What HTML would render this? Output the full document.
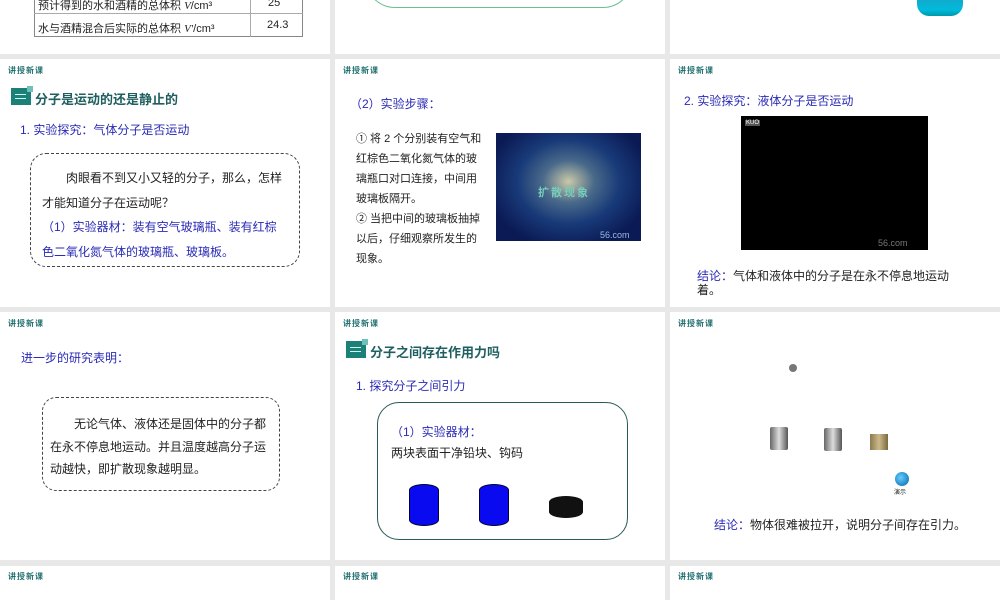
<!DOCTYPE html>
<html><head><meta charset="utf-8"><style>
*{margin:0;padding:0;box-sizing:border-box}
html,body{width:1000px;height:600px;overflow:hidden}
body{background:#e8e8e8;position:relative;font-family:"Liberation Sans","Noto Sans CJK SC",sans-serif;color:#222}
.s{position:absolute;background:#fff;width:330px;height:248px}
.a{position:absolute;white-space:nowrap}
.lbl{font-size:8px;font-weight:bold;color:#1e6e6e;letter-spacing:1px}
.blue{color:#2a2ab5}
.h{font-size:13px;font-weight:bold;color:#1f5f5f}
.ic{position:absolute;width:20px;height:17px;background:#1a8078}
.ic:before{content:"";position:absolute;right:-2px;top:-2px;width:6px;height:6px;background:#6fc0b8}
.ic:after{content:"";position:absolute;left:4px;top:10px;width:11px;height:1px;background:#cfe;box-shadow:0 -4px 0 #cfe}
.t{font-size:12px}
</style></head><body>
<!-- row1 -->
<div class="s" style="left:0;top:-194px"></div>
<div class="s" style="left:335px;top:-194px"></div>
<div class="s" style="left:670px;top:-194px"></div>
<div class="a" style="left:34px;top:-12px;width:269px;height:49px;border:1px solid #888;border-top:none"></div>
<div class="a" style="left:34px;top:13px;width:269px;border-top:1px solid #aaa"></div>
<div class="a" style="left:250px;top:-12px;height:49px;border-left:1px solid #aaa"></div>
<div class="a" style="left:38px;top:-3px;font-size:11px">预计得到的水和酒精的总体积 <i style="font-family:'Liberation Serif'">V</i>/cm³</div>
<div class="a" style="left:268px;top:-3px;font-size:11px">25</div>
<div class="a" style="left:38px;top:20px;font-size:11px">水与酒精混合后实际的总体积 <i style="font-family:'Liberation Serif'">V'</i>/cm³</div>
<div class="a" style="left:267px;top:19px;font-size:11px">24.3</div>
<div class="a" style="left:365px;top:-40px;width:268px;height:48px;border:1px solid #6cbf94;border-radius:0 0 30px 30px;border-top:none"></div>
<div class="a" style="left:917px;top:0;width:46px;height:16px;background:linear-gradient(#1ac,#0bd 60%,#09a);border-radius:0 0 12px 12px"></div>
<!-- row2 -->
<div class="s" style="left:0;top:59px"></div>
<div class="s" style="left:335px;top:59px"></div>
<div class="s" style="left:670px;top:59px"></div>
<div class="a lbl" style="left:8px;top:65px">讲授新课</div>
<div class="a lbl" style="left:343px;top:65px">讲授新课</div>
<div class="a lbl" style="left:678px;top:65px">讲授新课</div>
<div class="ic" style="left:11px;top:88px"></div>
<div class="a h" style="left:35px;top:89px">分子是运动的还是静止的</div>
<div class="a t blue" style="left:20px;top:121px">1. 实验探究：气体分子是否运动</div>
<div class="a" style="left:30px;top:153px;width:270px;height:114px;border:1px dashed #444;border-radius:16px"></div>
<div class="a t" style="left:42px;top:166px;line-height:24.5px;white-space:normal;width:246px">&emsp;&emsp;肉眼看不到又小又轻的分子，那么，怎样才能知道分子在运动呢？<br><span class="blue">（1）实验器材：装有空气玻璃瓶、装有红棕色二氧化氮气体的玻璃瓶、玻璃板。</span></div>
<div class="a t blue" style="left:350px;top:95px">（2）实验步骤：</div>
<div class="a" style="left:356px;top:129px;line-height:20px;white-space:normal;width:128px;font-size:11px">① 将 2 个分别装有空气和红棕色二氧化氮气体的玻璃瓶口对口连接，中间用玻璃板隔开。<br>② 当把中间的玻璃板抽掉以后，仔细观察所发生的现象。</div>
<div class="a" style="left:496px;top:133px;width:145px;height:108px;background:radial-gradient(ellipse at 50% 45%,#c9c9a8 0%,#4a6a8a 25%,#183a78 50%,#0b1a55 80%)"></div>
<div class="a" style="left:538px;top:184px;font-size:11px;font-weight:bold;color:#7cb;letter-spacing:2px">扩散现象</div>
<div class="a" style="left:600px;top:230px;font-size:9px;color:#9bd">56.com</div>
<div class="a t blue" style="left:684px;top:92px">2. 实验探究：液体分子是否运动</div>
<div class="a" style="left:741px;top:116px;width:187px;height:134px;background:#000"></div>
<div class="a" style="left:745px;top:120px;font-size:6px;color:#fff;background:#555;padding:0 1px">KUO</div>
<div class="a" style="left:878px;top:238px;font-size:9px;color:#777">56.com</div>
<div class="a t" style="left:697px;top:269px;white-space:normal;width:256px;line-height:14px"><span class="blue">结论：</span>气体和液体中的分子是在永不停息地运动着。</div>
<!-- row3 -->
<div class="s" style="left:0;top:312px"></div>
<div class="s" style="left:335px;top:312px"></div>
<div class="s" style="left:670px;top:312px"></div>
<div class="a lbl" style="left:8px;top:318px">讲授新课</div>
<div class="a lbl" style="left:343px;top:318px">讲授新课</div>
<div class="a lbl" style="left:678px;top:318px">讲授新课</div>
<div class="a t blue" style="left:21px;top:349px">进一步的研究表明：</div>
<div class="a" style="left:42px;top:397px;width:238px;height:94px;border:1px dashed #444;border-radius:14px"></div>
<div class="a t" style="left:50px;top:413px;line-height:22.5px;white-space:normal;width:222px">&emsp;&emsp;无论气体、液体还是固体中的分子都在永不停息地运动。并且温度越高分子运动越快，即扩散现象越明显。</div>
<div class="ic" style="left:346px;top:341px"></div>
<div class="a h" style="left:370px;top:342px">分子之间存在作用力吗</div>
<div class="a t blue" style="left:356px;top:377px">1. 探究分子之间引力</div>
<div class="a" style="left:377px;top:402px;width:251px;height:138px;border:1px solid #2a5a5a;border-radius:22px"></div>
<div class="a t blue" style="left:391px;top:423px">（1）实验器材：</div>
<div class="a t" style="left:391px;top:444px">两块表面干净铅块、钩码</div>
<div class="a" style="left:409px;top:484px;width:30px;height:42px;background:#0a0af0;border:1px solid #003;border-radius:15px/6px"></div>
<div class="a" style="left:479px;top:484px;width:30px;height:42px;background:#0a0af0;border:1px solid #003;border-radius:15px/6px"></div>
<div class="a" style="left:549px;top:496px;width:34px;height:22px;background:#111;border-radius:17px/6px"></div>
<div class="a" style="left:789px;top:364px;width:8px;height:8px;border-radius:50%;background:#777"></div>
<div class="a" style="left:770px;top:427px;width:18px;height:23px;background:linear-gradient(90deg,#666,#ddd,#555);border-radius:2px"></div>
<div class="a" style="left:824px;top:428px;width:18px;height:23px;background:linear-gradient(90deg,#666,#ddd,#555);border-radius:2px"></div>
<div class="a" style="left:870px;top:434px;width:18px;height:16px;background:linear-gradient(90deg,#8a7a50,#cdb98a,#7a6a40)"></div>
<div class="a" style="left:895px;top:472px;width:14px;height:14px;border-radius:50%;background:radial-gradient(circle at 40% 40%,#6cf,#06a)"></div>
<div class="a" style="left:894px;top:487px;font-size:6px">演示</div>
<div class="a t" style="left:714px;top:516px"><span class="blue">结论：</span>物体很难被拉开，说明分子间存在引力。</div>
<!-- row4 -->
<div class="s" style="left:0;top:566px;height:34px"></div>
<div class="s" style="left:335px;top:566px;height:34px"></div>
<div class="s" style="left:670px;top:566px;height:34px"></div>
<div class="a lbl" style="left:8px;top:571px">讲授新课</div>
<div class="a lbl" style="left:343px;top:571px">讲授新课</div>
<div class="a lbl" style="left:678px;top:571px">讲授新课</div>
</body></html>
